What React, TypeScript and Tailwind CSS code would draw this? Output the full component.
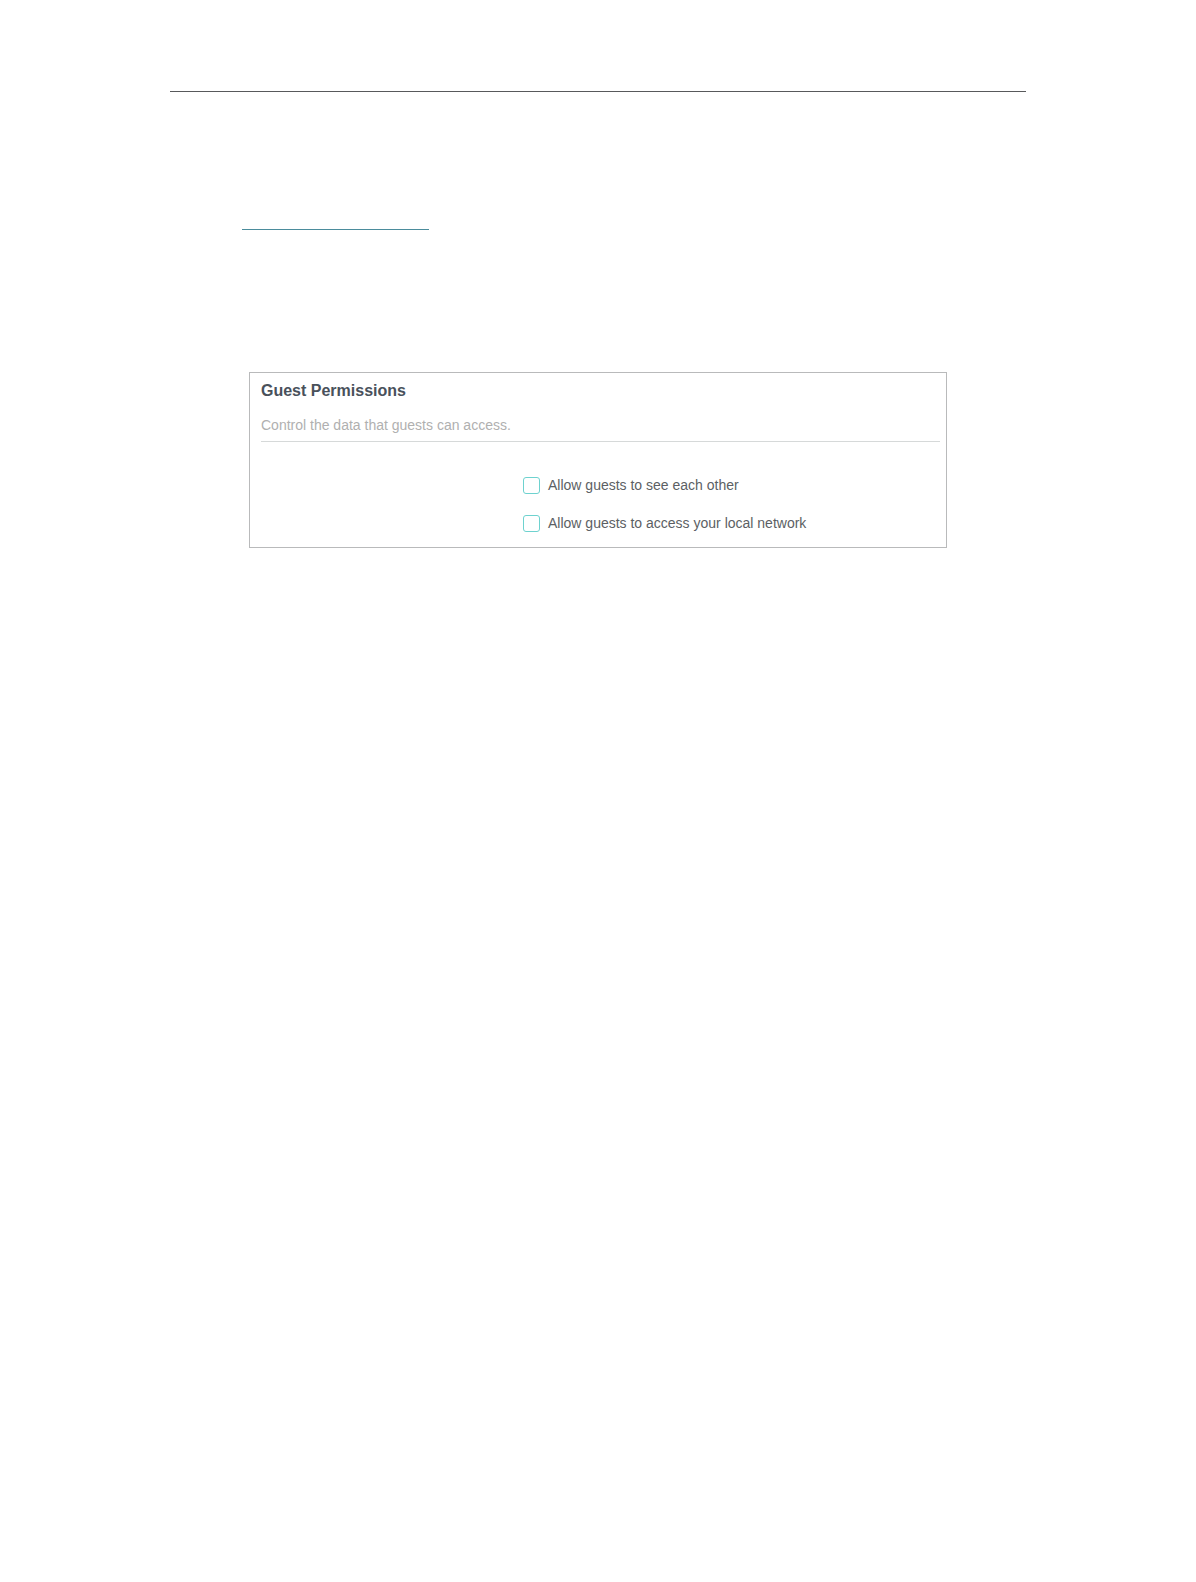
import { useState } from "react";

const PERMISSIONS = [
  { id: "see-each-other", label: "Allow guests to see each other" },
  { id: "local-network",  label: "Allow guests to access your local network" },
];

function GuestPermissions() {
  const [allowed, setAllowed] = useState<string[]>([]);

  const toggle = (id: string) => {
    setAllowed((prev) => (prev.includes(id) ? prev.filter((p) => p !== id) : [...prev, id]));
  };

  return (
    <section className="border border-[#b9babb] pt-2 pr-1.5 pb-3.5 pl-[11px]">
      <h2 className="text-base leading-5 font-bold text-[#49515b]">Guest Permissions</h2>
      <p className="mt-3.5 border-b border-[#d6d9d9] pb-1.5 text-sm leading-5 text-[#b0b0b0]">
        Control the data that guests can access.
      </p>

      <div className="mt-[33px] ml-[262px] flex flex-col gap-4.5">
        {PERMISSIONS.map((item) => (
          <label key={item.id} htmlFor={item.id} className="flex items-center gap-2 text-sm leading-5 text-[#5c5f64]">
            <input
              id={item.id}
              type="checkbox"
              checked={allowed.includes(item.id)}
              onChange={() => toggle(item.id)}
              className="size-[17px] shrink-0 appearance-none rounded-[3px] border border-[#6ed2cf] bg-white checked:bg-[#6ed2cf]"
            />
            {item.label}
          </label>
        ))}
      </div>
    </section>
  );
}

export default function App() {
  return (
    <main className="min-h-screen bg-white px-[170px] pt-[91px] font-['Liberation_Sans',Arial,sans-serif]">
      <hr className="h-px border-0 bg-[#58595b]" />
      <hr className="mt-[137px] ml-[72px] h-px w-[187px] border-0 bg-[#4b8c9c]" />
      <div className="mx-[79px] mt-[142px]">
        <GuestPermissions />
      </div>
    </main>
  );
}
